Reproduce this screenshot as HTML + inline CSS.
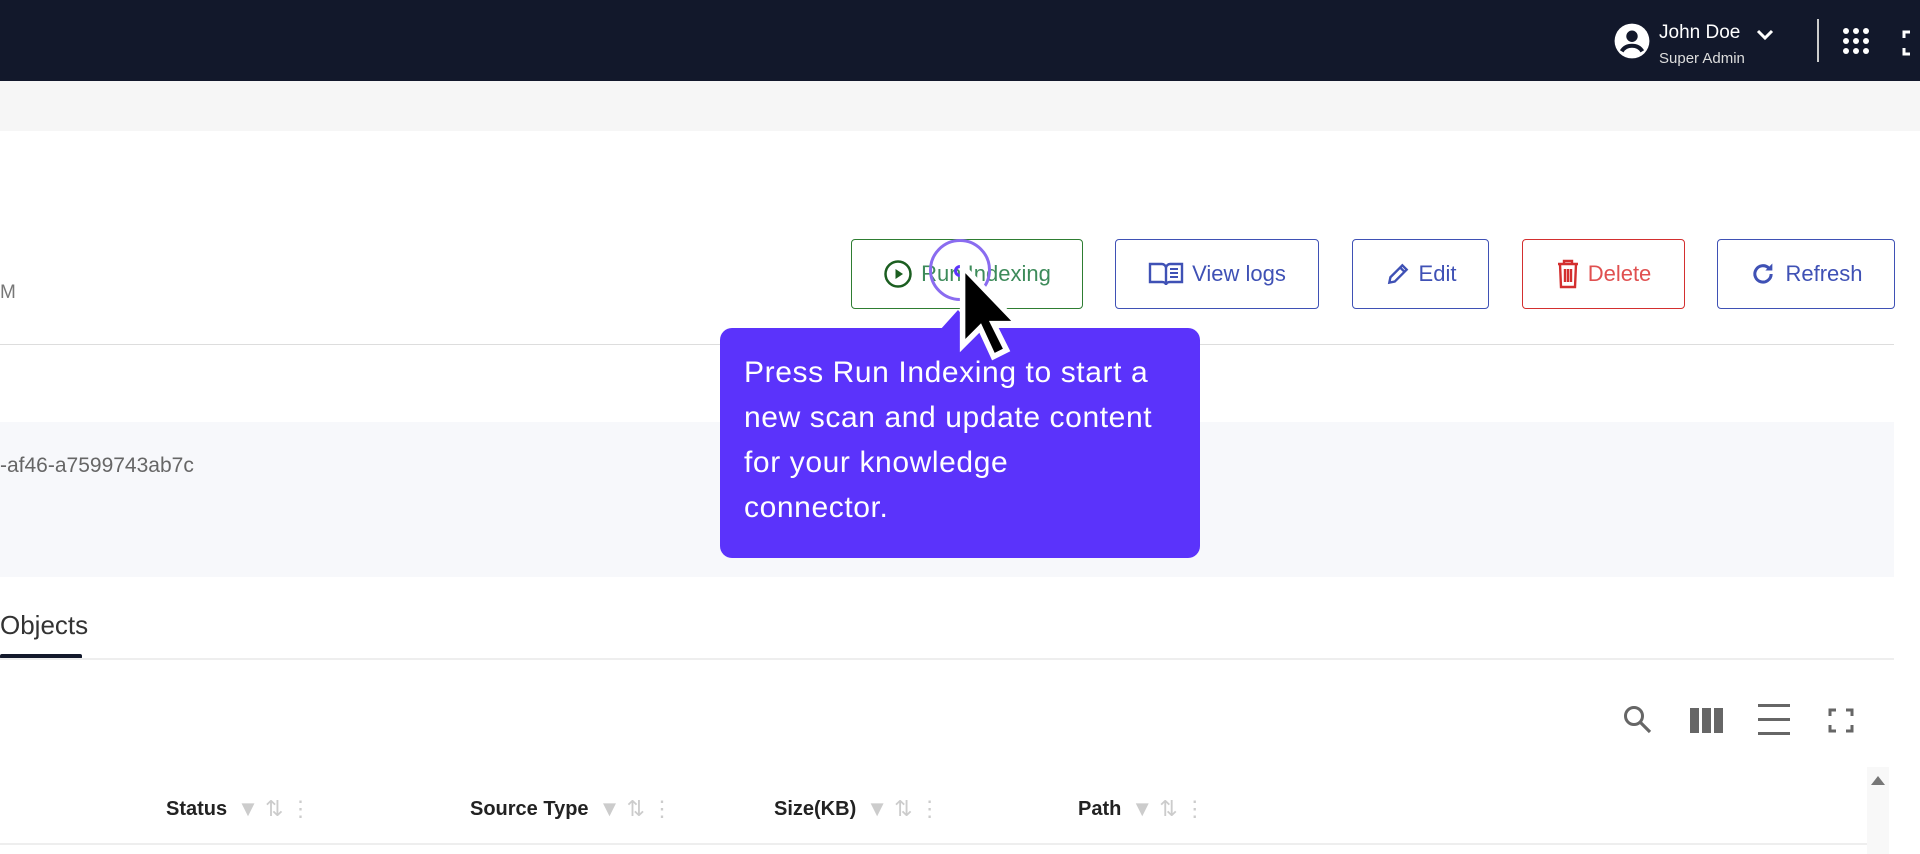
<!DOCTYPE html>
<html><head><meta charset="utf-8"><style>
*{margin:0;padding:0;box-sizing:border-box}
body{width:1920px;height:854px;overflow:hidden;background:#fff;font-family:"Liberation Sans",sans-serif;position:relative}
.a{position:absolute}
.hdr{left:0;top:0;width:1920px;height:81px;background:#12182b}
.band{left:0;top:81px;width:1920px;height:50px;background:#f6f6f6}
.btn{position:absolute;top:239px;height:70px;border:1px solid #3f51b5;border-radius:4px;background:#fff;color:#3f51b5;font-size:22px;display:flex;align-items:center;justify-content:center;gap:8px}
.th{position:absolute;top:796px;font-size:20px;font-weight:bold;color:#222;display:flex;align-items:center;gap:10px}
.ic{color:#ccc;font-weight:normal;font-size:22px}
</style></head><body>
<div class="a hdr"></div>
<svg class="a" style="left:1613px;top:22px" width="38" height="38" viewBox="0 0 24 24"><circle cx="12" cy="12" r="11" fill="#fff"/><circle cx="12" cy="9" r="3.6" fill="#12182b"/><path d="M5.5 18.5c1.5-2.5 4-3.5 6.5-3.5s5 1 6.5 3.5" stroke="#12182b" stroke-width="2.6" fill="none"/></svg>
<div class="a" style="left:1659px;top:22px;color:#fff;font-size:19px">John Doe</div>
<svg class="a" style="left:1755px;top:28px" width="20" height="14" viewBox="0 0 20 14"><path d="M3 3l7 7 7-7" stroke="#fff" stroke-width="3" fill="none"/></svg>
<div class="a" style="left:1659px;top:50px;color:#ddd;font-size:15px">Super Admin</div>
<div class="a" style="left:1817px;top:19px;width:2px;height:43px;background:#ccc"></div>
<svg class="a" style="left:1842px;top:27px" width="28" height="28" viewBox="0 0 28 28" fill="#fff"><circle cx="4" cy="4" r="3"/><circle cx="14" cy="4" r="3"/><circle cx="24" cy="4" r="3"/><circle cx="4" cy="14" r="3"/><circle cx="14" cy="14" r="3"/><circle cx="24" cy="14" r="3"/><circle cx="4" cy="24" r="3"/><circle cx="14" cy="24" r="3"/><circle cx="24" cy="24" r="3"/></svg>
<svg class="a" style="left:1902px;top:30px" width="18" height="26" viewBox="0 0 18 26"><path d="M2 8V2h6M2 18v6h6" stroke="#fff" stroke-width="3" fill="none"/></svg>
<div class="a band"></div>
<div class="a" style="left:0;top:282px;font-size:19px;color:#777">M</div>
<div class="btn" style="left:851px;width:232px;border-color:#2e7d32;color:#3d8b5a"><svg width="30" height="30" viewBox="0 0 24 24"><circle cx="12" cy="12" r="10" stroke="#1b5e20" stroke-width="2" fill="none"/><path d="M10 8l6 4-6 4z" fill="#1b5e20"/></svg>Run Indexing</div>
<div class="btn" style="left:1115px;width:204px"><svg width="36" height="26" viewBox="0 0 36 26"><path d="M2 3h12c2 0 4 2 4 4v17c0-2-2-3-4-3H2zM34 3H22c-2 0-4 2-4 4v17c0-2 2-3 4-3h12z" stroke="#3f51b5" stroke-width="2.4" fill="none"/><path d="M22 8h8M22 12h8M22 16h8" stroke="#3f51b5" stroke-width="2"/></svg>View logs</div>
<div class="btn" style="left:1352px;width:137px"><svg width="26" height="28" viewBox="0 0 24 24"><path d="M4 20l1-5L16 4l4 4L9 19z M14 6l4 4" stroke="#3f51b5" stroke-width="2.2" fill="none"/></svg>Edit</div>
<div class="btn" style="left:1522px;width:163px;border-color:#d32f2f;color:#e05050"><svg width="24" height="30" viewBox="0 0 24 30"><path d="M2 5h20M8 5V2h8v3M4 5l1 23h14l1-23M9 10v13M12 10v13M15 10v13" stroke="#d32f2f" stroke-width="2.4" fill="none"/></svg>Delete</div>
<div class="btn" style="left:1717px;width:178px"><svg width="28" height="28" viewBox="0 0 24 24"><path d="M19 12a7 7 0 1 1-2-5" stroke="#3f51b5" stroke-width="2.6" fill="none"/><path d="M20 3v6h-6z" fill="#3f51b5"/></svg>Refresh</div>
<div class="a" style="left:0;top:344px;width:1894px;height:1px;background:#ddd"></div>
<div class="a" style="left:0;top:422px;width:1894px;height:155px;background:#f7f8fb"></div>
<div class="a" style="left:0;top:454px;font-size:21px;color:#666">-af46-a7599743ab7c</div>
<div class="a" style="left:0;top:610px;font-size:26px;color:#333">Objects</div>
<div class="a" style="left:0;top:654px;width:82px;height:5px;background:#12182b;border-radius:2px"></div>
<div class="a" style="left:0;top:658px;width:1894px;height:2px;background:#eee"></div>
<svg class="a" style="left:1622px;top:704px" width="32" height="32" viewBox="0 0 32 32"><circle cx="12" cy="12" r="8.5" stroke="#666" stroke-width="3" fill="none"/><path d="M18 18l10 10" stroke="#666" stroke-width="3.2"/></svg>
<svg class="a" style="left:1690px;top:708px" width="33" height="25" viewBox="0 0 33 25" fill="#666"><rect x="0" y="0" width="9" height="25"/><rect x="12" y="0" width="9" height="25"/><rect x="24" y="0" width="9" height="25"/></svg>
<svg class="a" style="left:1758px;top:704px" width="32" height="31" viewBox="0 0 32 31" fill="#666"><rect y="0" width="32" height="3"/><rect y="14" width="32" height="3"/><rect y="28" width="32" height="3"/></svg>
<svg class="a" style="left:1828px;top:708px" width="26" height="25" viewBox="0 0 26 25"><path d="M2 8V2h6M18 2h6v6M2 17v6h6M24 17v6h-6" stroke="#666" stroke-width="3" fill="none"/></svg>
<div class="a" style="left:1867px;top:767px;width:22px;height:87px;background:#f8f8f8"></div>
<svg class="a" style="left:1871px;top:776px" width="14" height="9"><path d="M0 9L7 0l7 9z" fill="#777"/></svg>
<div class="th" style="left:166px">Status <span class="ic">▼ ⇅ ⋮</span></div>
<div class="th" style="left:470px">Source Type <span class="ic">▼ ⇅ ⋮</span></div>
<div class="th" style="left:774px">Size(KB) <span class="ic">▼ ⇅ ⋮</span></div>
<div class="th" style="left:1078px">Path <span class="ic">▼ ⇅ ⋮</span></div>
<div class="a" style="left:0;top:843px;width:1867px;height:2px;background:#eee"></div>
<div class="a" style="left:720px;top:328px;width:480px;height:230px;background:#5b33fb;border-radius:12px"></div>
<svg class="a" style="left:940px;top:310px" width="36" height="20"><path d="M0 20L18 0l18 20z" fill="#5b33fb"/></svg>
<div class="a" style="left:744px;top:350px;width:460px;color:#fff;font-size:30px;line-height:45px;letter-spacing:0.6px;white-space:nowrap">Press Run Indexing to start a<br>new scan and update content<br>for your knowledge<br>connector.</div>
<div class="a" style="left:929px;top:239px;width:62px;height:62px;border:3px solid #8a6cf0;border-radius:50%"></div>
<div class="a" style="left:954px;top:265px;width:12px;height:12px;border:3px solid #5b33fb;border-radius:50%"></div>
<svg class="a" style="left:956px;top:262px" width="66" height="110" viewBox="0 0 30 50"><path d="M3 2v36l8-8 6 13 6-3-6-12h11z" fill="#000" stroke="#fff" stroke-width="2.5"/></svg>
</body></html>
